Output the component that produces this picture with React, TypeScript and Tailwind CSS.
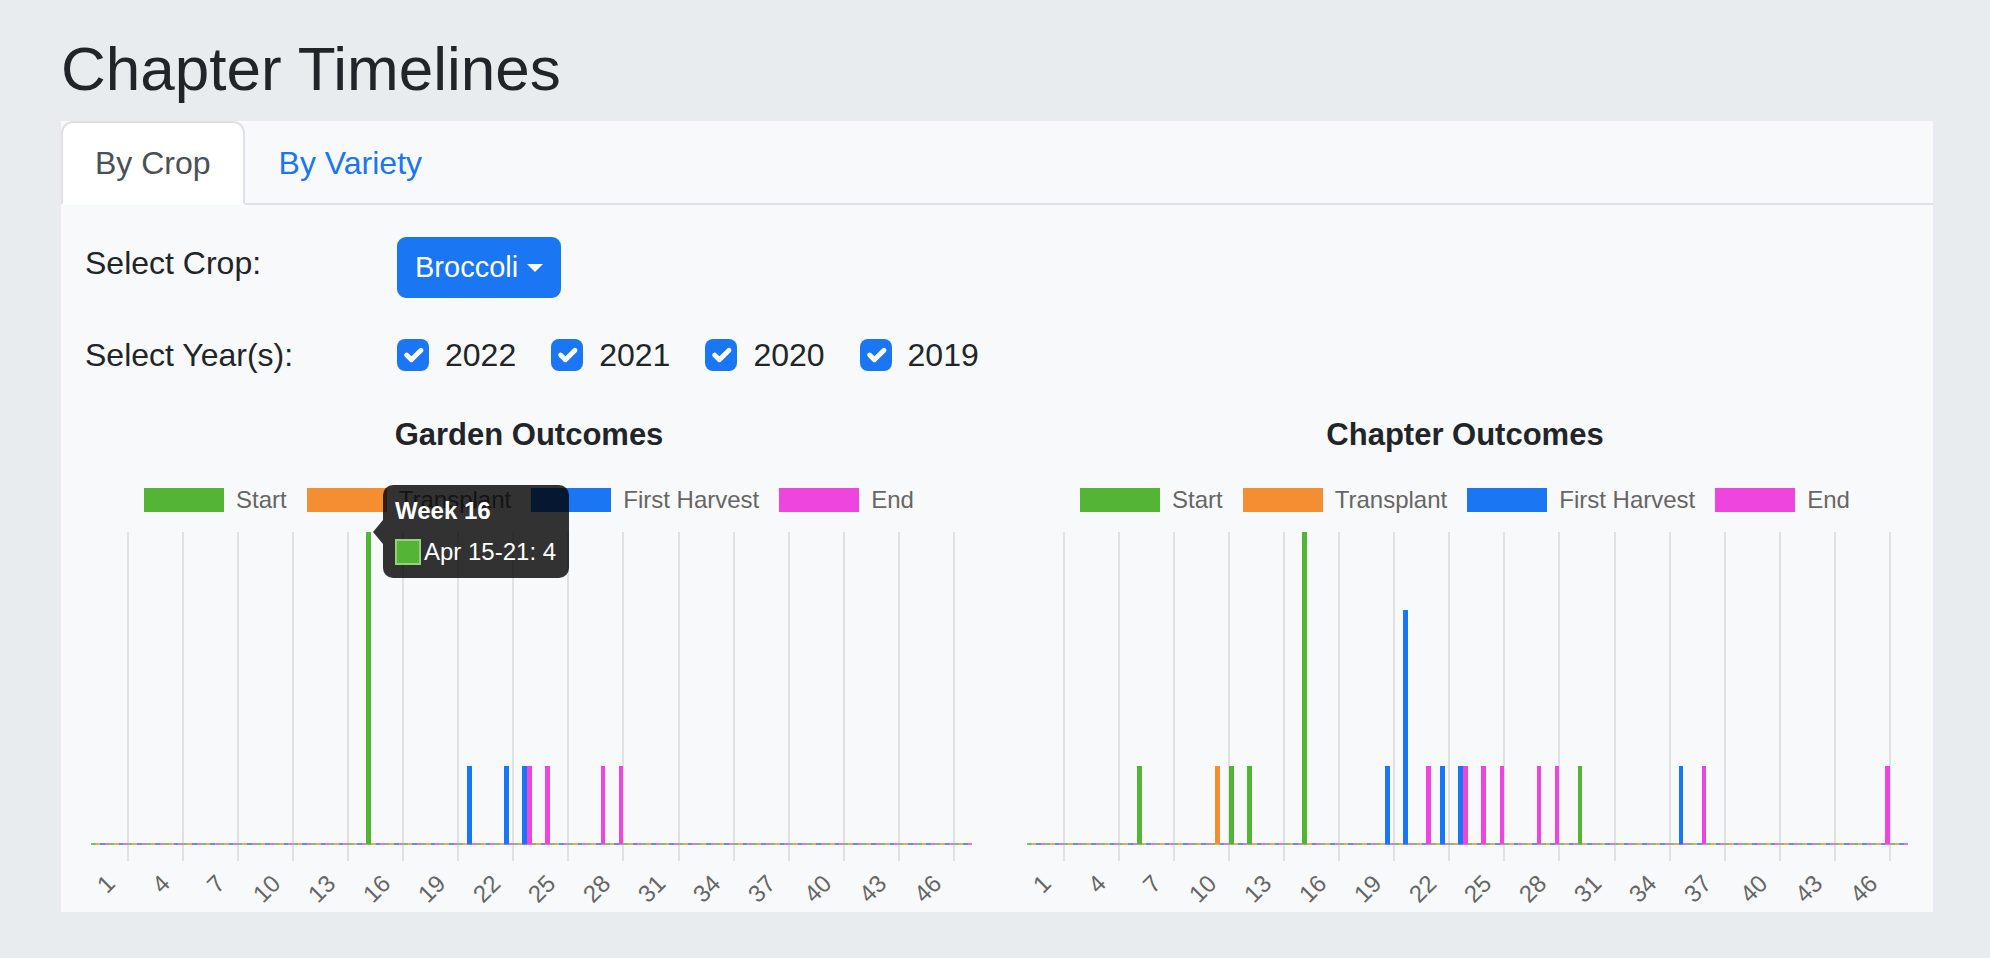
import React from 'react';

// one week = one category on the x axis
const W = 18.36;
const SLOT = 4.6;
const UNIT = 78; // px per count

const slotColors = ['bg-[#53b435]', 'bg-[#f48e33]', 'bg-[#1a76f2]', 'bg-[#ef45df]'];

const legend = [
  { label: 'Start', color: 'bg-[#53b435]' },
  { label: 'Transplant', color: 'bg-[#f48e33]' },
  { label: 'First Harvest', color: 'bg-[#1a76f2]' },
  { label: 'End', color: 'bg-[#ef45df]' },
];

type Bar = [number, number, number]; // week, dataset slot, count

const gardenBars: Bar[] = [
  [16, 0, 4], [21, 2, 1], [23, 2, 1], [24, 2, 1], [24, 3, 1], [25, 3, 1], [28, 3, 1], [29, 3, 1],
];

const chapterBars: Bar[] = [
  [7, 0, 1], [11, 1, 1], [12, 0, 1], [13, 0, 1], [16, 0, 4], [20, 2, 1], [21, 2, 3], [22, 3, 1],
  [23, 2, 1], [24, 2, 1], [24, 3, 1], [25, 3, 1], [26, 3, 1], [28, 3, 1], [29, 3, 1], [31, 0, 1],
  [36, 2, 1], [37, 3, 1], [47, 3, 1],
];

const ticks = Array.from({ length: 16 }, (_, j) => 1 + 3 * j);

const Check = () => (
  <svg viewBox="0 0 20 20" className="h-[32px] w-[32px]">
    <path d="m6 10 3 3 6-6" fill="none" stroke="#fff" strokeWidth="3" strokeLinecap="round" strokeLinejoin="round" />
  </svg>
);

const Tooltip = () => (
  <div className="absolute left-[298px] top-[70px] z-10 w-[186px] rounded-[10px] bg-black/80 px-[12px] pt-[14px] pb-[13px] text-white">
    <div className="absolute -left-[10px] top-[35px] h-0 w-0 border-y-[12px] border-r-[10px] border-y-transparent border-r-black/80" />
    <div className="text-[24px] font-bold leading-[24px]">Week 16</div>
    <div className="mt-[16px] flex items-center">
      <span className="h-[26px] w-[26px] border-2 border-[#93d17f] bg-[#53b435]" />
      <span className="ml-[3px] text-[24px] leading-[24px]">Apr 15-21: 4</span>
    </div>
  </div>
);

function TimelineChart({ title, bars, tooltip }: { title: string; bars: Bar[]; tooltip?: boolean }) {
  return (
    <div className="relative w-[888px]">
      <h5 className="text-center text-[31px] font-bold leading-[40px] text-[#212529]">{title}</h5>

      <div className="mt-[33px] flex h-[24px] items-center justify-center gap-[20px]">
        {legend.map((l) => (
          <div key={l.label} className="flex items-center gap-[12px]">
            <span className={`h-[24px] w-[80px] ${l.color}`} />
            <span className="text-[24px] leading-[24px] text-[#666]">{l.label}</span>
          </div>
        ))}
      </div>

      {tooltip && <Tooltip />}

      <div className="relative ml-[6px] mt-[20px] h-[379px] w-[881px]">
        {ticks.map((t, j) => (
          <div
            key={`g${t}`}
            className="absolute top-0 h-[329px] w-[2px] bg-[#e0e1e2]"
            style={{ left: (2 + 3 * j) * W - 1 }}
          />
        ))}

        <div className="absolute left-0 top-[311px] h-[2px] w-[881px] bg-[#dedede]" />
        <div className="absolute left-0 top-[311px] h-[2px] w-[881px] opacity-70 bg-[repeating-linear-gradient(90deg,#53b435_0px_4.6px,#f48e33_4.6px_9.2px,#1a76f2_9.2px_13.8px,#ef45df_13.8px_18.36px)]" />

        {bars.map(([week, slot, v], i) => (
          <div
            key={i}
            className={`absolute bottom-[67px] w-[4.6px] ${slotColors[slot]}`}
            style={{ left: (week - 1) * W + slot * SLOT, height: v * UNIT }}
          />
        ))}

        {ticks.map((t, j) => (
          <div key={`t${t}`} className="absolute top-[339px] h-0 w-0" style={{ left: (3 * j + 0.5) * W + 2 }}>
            <span className="absolute right-0 top-0 origin-top-right -rotate-45 whitespace-nowrap text-[24px] leading-[24px] text-[#666]">
              {t}
            </span>
          </div>
        ))}
      </div>
    </div>
  );
}

export default function App() {
  const years = ['2022', '2021', '2020', '2019'];
  return (
    <div className="min-h-screen bg-[#e9ecef] pl-[61px] pt-[32px] font-['Liberation_Sans',Arial,sans-serif] text-[#212529]">
      <h2 className="text-[62px] font-medium leading-[74px]">Chapter Timelines</h2>

      <div className="mt-[15px] h-[791px] w-[1872px] bg-[#f8f9fa]">
        <nav className="flex border-b-2 border-[#dee2e6]">
          <div className="-mb-[2px] rounded-t-[12px] border-2 border-[#dee2e6] border-b-white bg-white px-[32px] py-[16px] text-[32px] leading-[48px] text-[#495057]">
            By Crop
          </div>
          <div className="-mb-[2px] border-2 border-transparent px-[32px] py-[16px] text-[32px] leading-[48px] text-[#1a76f2]">
            By Variety
          </div>
        </nav>

        <div className="px-[24px] pt-[32px]">
          <div className="flex items-start">
            <label className="w-[312px] pt-[2px] text-[32px] leading-[48px]">Select Crop:</label>
            <button className="inline-flex items-center rounded-[9px] border-2 border-[#1a76f2] bg-[#1a76f2] px-[16px] py-[8px] text-[29px] leading-[41px] text-white">
              Broccoli
              <span className="ml-[9px] h-0 w-0 border-x-[8.5px] border-t-[8.5px] border-x-transparent border-t-white" />
            </button>
          </div>

          <div className="mt-[33px] flex h-[48px] items-center">
            <label className="w-[312px] text-[32px] leading-[48px]">Select Year(s):</label>
            {years.map((y) => (
              <div key={y} className="mr-[35px] flex items-center">
                <span className="flex h-[32px] w-[32px] items-center justify-center rounded-[8px] bg-[#1a76f2]">
                  <Check />
                </span>
                <span className="ml-[16px] text-[32px] leading-[48px]">{y}</span>
              </div>
            ))}
          </div>

          <div className="mt-[36px] flex gap-[48px]">
            <TimelineChart title="Garden Outcomes" bars={gardenBars} tooltip />
            <TimelineChart title="Chapter Outcomes" bars={chapterBars} />
          </div>
        </div>
      </div>
    </div>
  );
}
